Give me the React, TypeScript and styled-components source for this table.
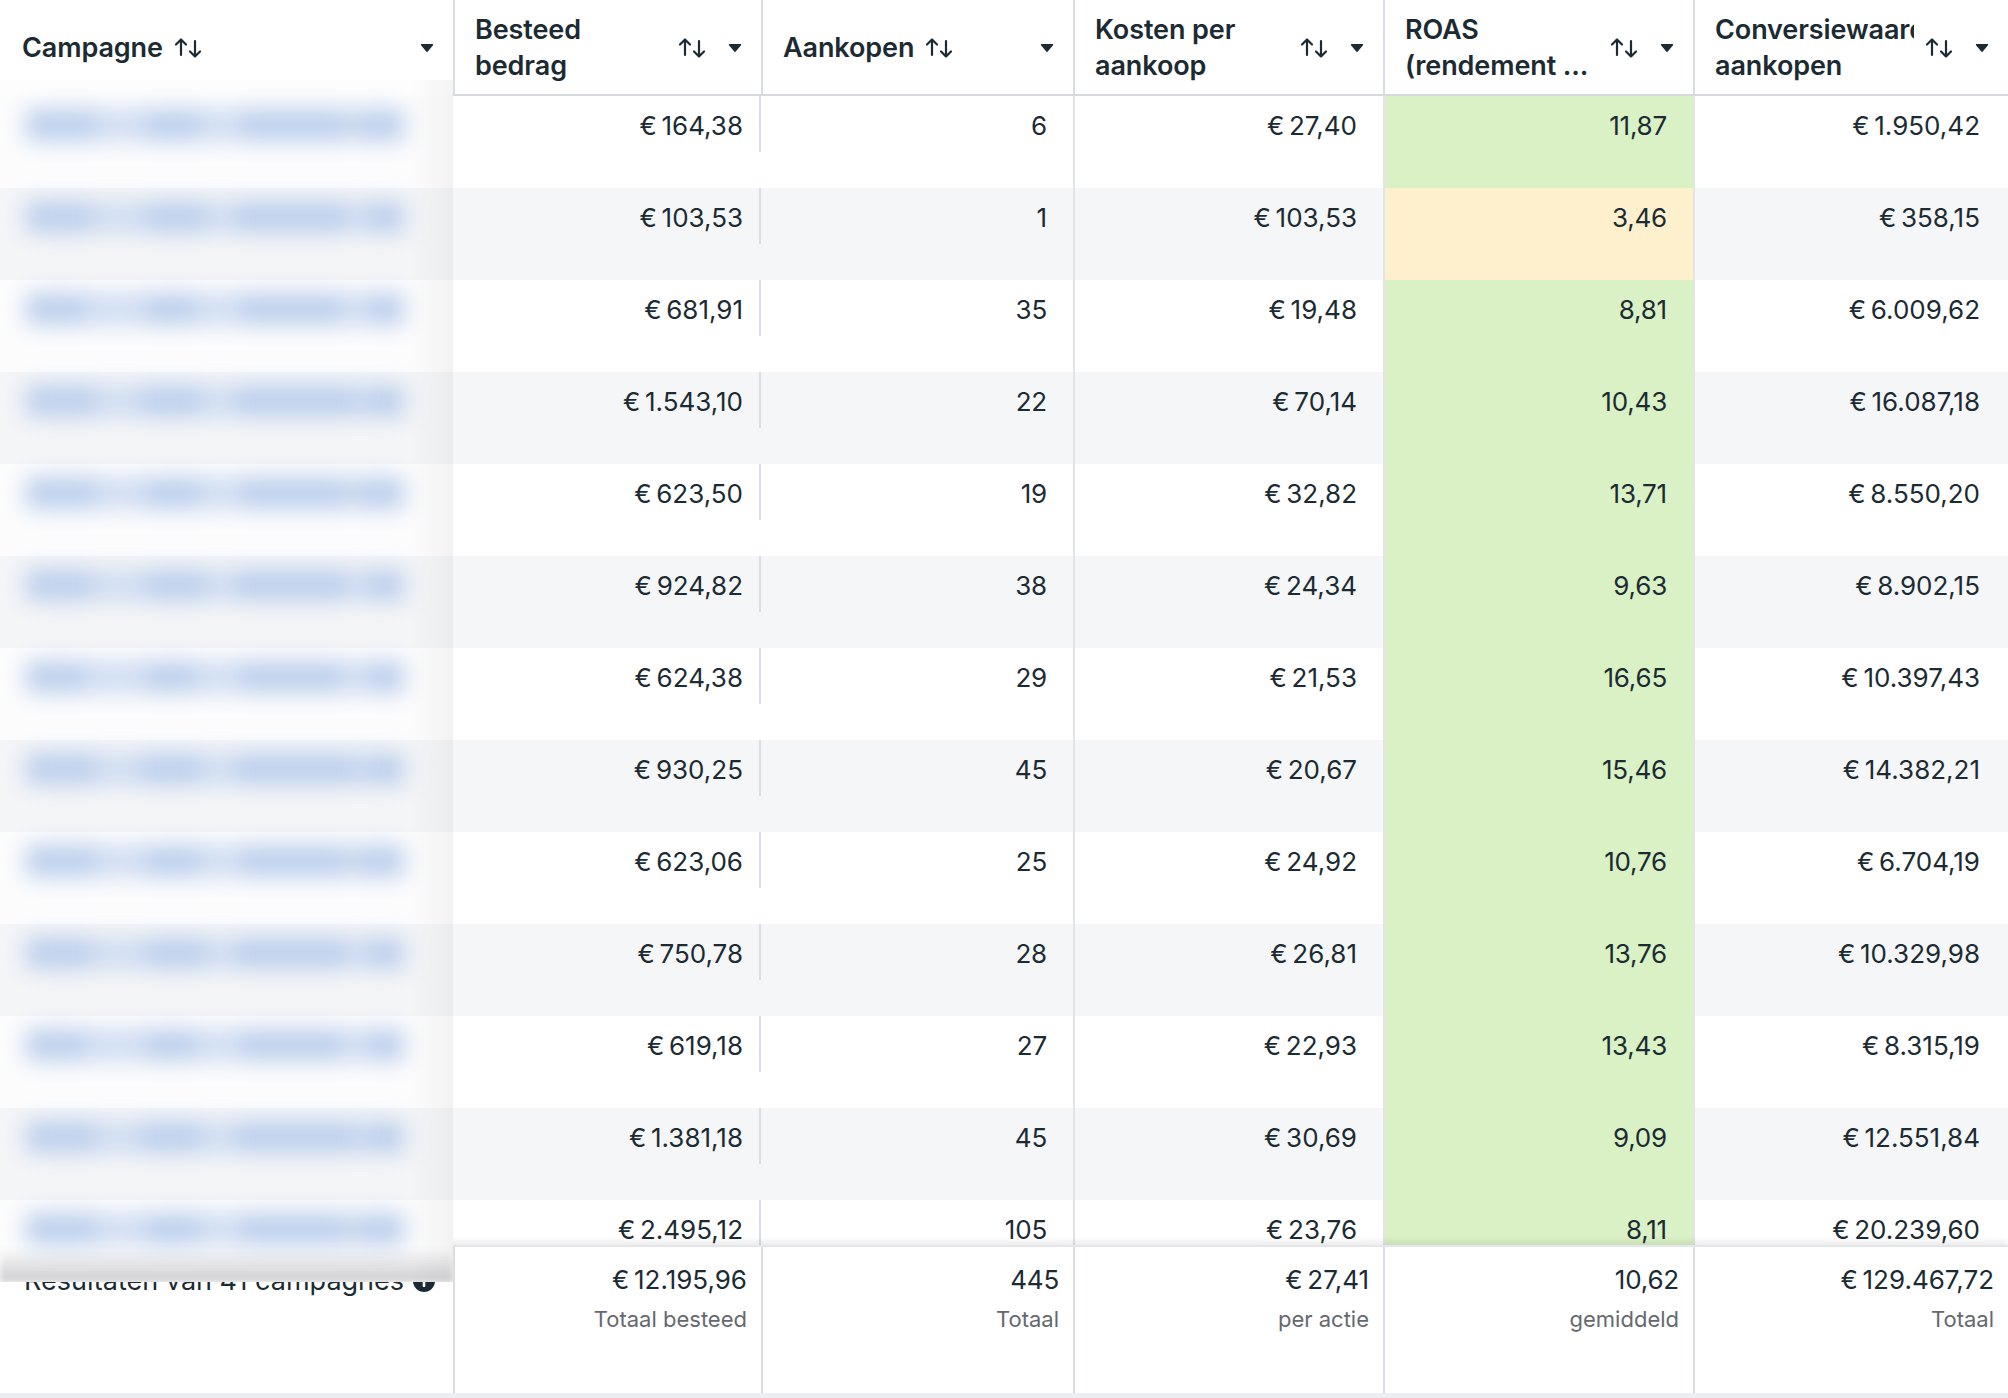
import React from 'react';
import styled, { createGlobalStyle, css } from 'styled-components';

const GlobalStyle = createGlobalStyle`
  *, *::before, *::after { box-sizing: border-box; }
  html, body { margin: 0; padding: 0; }
  body {
    background: #eceef1;
    font-family: "Inter", "Roboto", "Liberation Sans", sans-serif;
    color: #1c2b33;
  }
`;

const COLS = '453px 308px 312px 310px 310px 315px';

const Table = styled.div`
  position: relative;
  width: 2008px;
  height: 1393px;
  background: #ffffff;
  display: flex;
  flex-direction: column;
  overflow: hidden;
`;

const HeaderRow = styled.div`
  display: grid;
  grid-template-columns: ${COLS};
  height: 96px;
  flex: 0 0 96px;
  border-bottom: 2px solid #d6d9dd;
  background: #fff;
`;

const HeadCell = styled.div<{ $first?: boolean }>`
  display: flex;
  align-items: center;
  min-width: 0;
  padding: 2px 19px 0 ${(p) => (p.$first ? 22 : 20)}px;
  border-left: ${(p) => (p.$first ? 'none' : '2px solid #dadde1')};
`;

const Label = styled.div<{ $grow?: boolean }>`
  flex: ${(p) => (p.$grow ? '1 1 0' : '0 0 auto')};
  min-width: 0;
  overflow: hidden;
  white-space: nowrap;
  font-size: 27px;
  font-weight: 600;
  line-height: 36px;
  color: #1c2b33;
  letter-spacing: -0.1px;
`;

const LabelLine = styled.span`
  display: block;
`;

const SortWrap = styled.span`
  flex: 0 0 auto;
  display: flex;
  margin-left: 10px;
`;

const Spacer = styled.span`
  flex: 1 1 auto;
`;

const CaretWrap = styled.span<{ $gap?: boolean }>`
  flex: 0 0 auto;
  display: flex;
  margin-left: ${(p) => (p.$gap ? 21 : 0)}px;
`;

const Body = styled.div`
  flex: 1 1 auto;
  overflow: hidden;
`;

const Row = styled.div<{ $alt?: boolean }>`
  display: grid;
  grid-template-columns: ${COLS};
  height: 92px;
  background: ${(p) => (p.$alt ? '#f5f6f7' : '#ffffff')};
`;

type Tone = 'green' | 'yellow' | undefined;

const Cell = styled.div<{ $tone?: Tone; $line?: boolean; $short?: boolean; $pr?: number }>`
  position: relative;
  min-width: 0;
  padding: 12px ${(p) => p.$pr ?? 26}px 0 0;
  text-align: right;
  font-size: 26px;
  line-height: 36px;
  color: #1c2b33;
  white-space: nowrap;
  letter-spacing: -0.2px;
  background: ${(p) =>
    p.$tone === 'green' ? '#d9f1c5' : p.$tone === 'yellow' ? '#fef0cd' : 'transparent'};
  border-left: ${(p) => (p.$line ? '2px solid #e2e4e7' : 'none')};
  ${(p) =>
    p.$short &&
    css`
      &::after {
        content: '';
        position: absolute;
        right: 0;
        top: 0;
        width: 2px;
        height: 56px;
        background: #dadde1;
      }
    `}
`;

const Footer = styled.div`
  position: relative;
  z-index: 1;
  display: grid;
  grid-template-columns: ${COLS};
  height: 148px;
  flex: 0 0 148px;
  background: #fff;
  border-top: 2px solid #e4e6e9;
  box-shadow: 0 -4px 6px rgba(0, 0, 0, 0.08);
`;

const FootLabel = styled.div`
  display: flex;
  align-items: center;
  gap: 9px;
  padding: 16px 0 0 24px;
  height: 52px;
  font-size: 27px;
  line-height: 36px;
  color: #1c2b33;
  white-space: nowrap;
`;

const FootCell = styled.div`
  min-width: 0;
  padding: 15px 14px 0 0;
  text-align: right;
  border-left: 2px solid #dadde1;
`;

const FootValue = styled.div`
  font-size: 26px;
  line-height: 36px;
  color: #1c2b33;
  white-space: nowrap;
  letter-spacing: -0.2px;
`;

const FootSub = styled.div`
  margin-top: 6px;
  font-size: 22px;
  line-height: 30px;
  color: #65696f;
  white-space: nowrap;
`;

/* privacy blur patch laid over the campaign name column */
const BlurPatch = styled.div`
  position: absolute;
  z-index: 3;
  top: 80px;
  left: 0;
  width: 453px;
  height: 1202px;
  overflow: hidden;
  display: flex;
  flex-direction: column;
  background: #fbfbfc;
  &::before {
    content: '';
    position: absolute;
    top: 0;
    right: 0;
    width: 44px;
    height: 100%;
    background: linear-gradient(to right, rgba(0, 0, 0, 0), rgba(0, 0, 0, 0.04));
    pointer-events: none;
  }
  &::after {
    content: '';
    position: absolute;
    left: 0;
    bottom: 0;
    width: 100%;
    height: 34px;
    background: linear-gradient(to bottom, rgba(0, 0, 0, 0), rgba(40, 42, 45, 0.22));
    filter: blur(3px);
    pointer-events: none;
  }
`;

const PatchTop = styled.div`
  flex: 0 0 16px;
  background: #fdfdfd;
`;

const PatchBand = styled.div<{ $alt?: boolean }>`
  flex: 0 0 92px;
  padding-top: 13px;
  background: ${(p) => (p.$alt ? '#f4f5f7' : '#fcfcfd')};
`;

const PatchBar = styled.div`
  display: flex;
  margin-left: 26px;
  width: 378px;
  height: 32px;
  border-radius: 16px;
  filter: blur(11px);
`;

const PatchSeg = styled.div<{ $dark?: boolean }>`
  height: 100%;
  background: ${(p) => (p.$dark ? '#bccfec' : '#d0ddf2')};
`;

const SortIcon = () => (
  <svg width="30" height="22" viewBox="0 0 30 22" fill="none">
    <path d="M8 18V2.5M3 7.5L8 2.5L13 7.5" stroke="#1c2b33" strokeWidth="2.2" strokeLinecap="round" strokeLinejoin="round" />
    <path d="M22 4V19.5M17 14.5L22 19.5L27 14.5" stroke="#1c2b33" strokeWidth="2.2" strokeLinecap="round" strokeLinejoin="round" />
  </svg>
);

const Caret = () => (
  <svg width="14" height="10" viewBox="0 0 14 10">
    <path d="M1.5 1.8H12.5L7 8.2Z" fill="#1c2b33" stroke="#1c2b33" strokeWidth="1.4" strokeLinejoin="round" />
  </svg>
);

const InfoIcon = () => (
  <svg width="22" height="22" viewBox="0 0 22 22">
    <circle cx="11" cy="11" r="11" fill="#1c2b33" />
    <rect x="9.7" y="9.5" width="2.6" height="7.5" rx="1" fill="#fff" />
    <circle cx="11" cy="6.4" r="1.6" fill="#fff" />
  </svg>
);

type Col = { lines: string[]; inline?: boolean };

const columns: Col[] = [
  { lines: ['Campagne'], inline: true },
  { lines: ['Besteed', 'bedrag'] },
  { lines: ['Aankopen'], inline: true },
  { lines: ['Kosten per', 'aankoop'] },
  { lines: ['ROAS', '(rendement ...'] },
  { lines: ['Conversiewaarde', 'aankopen'] },
];

type DataRow = { spend: string; buys: string; cpa: string; roas: string; tone: Tone; value: string };

const E = '€\u202F';

const rows: DataRow[] = [
  { spend: '164,38', buys: '6', cpa: '27,40', roas: '11,87', tone: 'green', value: '1.950,42' },
  { spend: '103,53', buys: '1', cpa: '103,53', roas: '3,46', tone: 'yellow', value: '358,15' },
  { spend: '681,91', buys: '35', cpa: '19,48', roas: '8,81', tone: 'green', value: '6.009,62' },
  { spend: '1.543,10', buys: '22', cpa: '70,14', roas: '10,43', tone: 'green', value: '16.087,18' },
  { spend: '623,50', buys: '19', cpa: '32,82', roas: '13,71', tone: 'green', value: '8.550,20' },
  { spend: '924,82', buys: '38', cpa: '24,34', roas: '9,63', tone: 'green', value: '8.902,15' },
  { spend: '624,38', buys: '29', cpa: '21,53', roas: '16,65', tone: 'green', value: '10.397,43' },
  { spend: '930,25', buys: '45', cpa: '20,67', roas: '15,46', tone: 'green', value: '14.382,21' },
  { spend: '623,06', buys: '25', cpa: '24,92', roas: '10,76', tone: 'green', value: '6.704,19' },
  { spend: '750,78', buys: '28', cpa: '26,81', roas: '13,76', tone: 'green', value: '10.329,98' },
  { spend: '619,18', buys: '27', cpa: '22,93', roas: '13,43', tone: 'green', value: '8.315,19' },
  { spend: '1.381,18', buys: '45', cpa: '30,69', roas: '9,09', tone: 'green', value: '12.551,84' },
  { spend: '2.495,12', buys: '105', cpa: '23,76', roas: '8,11', tone: 'green', value: '20.239,60' },
];

const totals = [
  { value: E + '12.195,96', sub: 'Totaal besteed' },
  { value: '445', sub: 'Totaal' },
  { value: E + '27,41', sub: 'per actie' },
  { value: '10,62', sub: 'gemiddeld' },
  { value: E + '129.467,72', sub: 'Totaal' },
];

const segPatterns: [number, boolean][][] = [
  [[70, true], [50, false], [55, true], [40, false], [105, true], [12, false], [46, true]],
  [[65, true], [55, false], [60, true], [30, false], [110, true], [22, false], [36, true]],
  [[60, true], [60, false], [50, true], [45, false], [100, true], [27, false], [36, true]],
  [[70, true], [45, false], [60, true], [35, false], [120, true], [10, false], [38, true]],
];

const App: React.FC = () => (
  <>
    <GlobalStyle />
    <Table>
      <HeaderRow>
        {columns.map((c, i) => (
          <HeadCell key={i} $first={i === 0}>
            <Label $grow={!c.inline}>
              {c.lines.map((l) => (
                <LabelLine key={l}>{l}</LabelLine>
              ))}
            </Label>
            <SortWrap>
              <SortIcon />
            </SortWrap>
            {c.inline && <Spacer />}
            <CaretWrap $gap={!c.inline}>
              <Caret />
            </CaretWrap>
          </HeadCell>
        ))}
      </HeaderRow>

      <Body>
        {rows.map((r, i) => (
          <Row key={i} $alt={i % 2 === 1}>
            <Cell />
            <Cell $short $pr={18}>{E + r.spend}</Cell>
            <Cell>{r.buys}</Cell>
            <Cell $line>{E + r.cpa}</Cell>
            <Cell $line $tone={r.tone}>{r.roas}</Cell>
            <Cell $line $pr={28}>{E + r.value}</Cell>
          </Row>
        ))}
      </Body>

      <Footer>
        <FootLabel>
          Resultaten van 41 campagnes
          <InfoIcon />
        </FootLabel>
        {totals.map((t, i) => (
          <FootCell key={i}>
            <FootValue>{t.value}</FootValue>
            <FootSub>{t.sub}</FootSub>
          </FootCell>
        ))}
      </Footer>

      <BlurPatch>
        <PatchTop />
        {rows.map((_, i) => (
          <PatchBand key={i} $alt={i % 2 === 1}>
            <PatchBar>
              {segPatterns[i % segPatterns.length].map(([w, d], j) => (
                <PatchSeg key={j} $dark={d} style={{ width: w }} />
              ))}
            </PatchBar>
          </PatchBand>
        ))}
      </BlurPatch>
    </Table>
  </>
);

export default App;
